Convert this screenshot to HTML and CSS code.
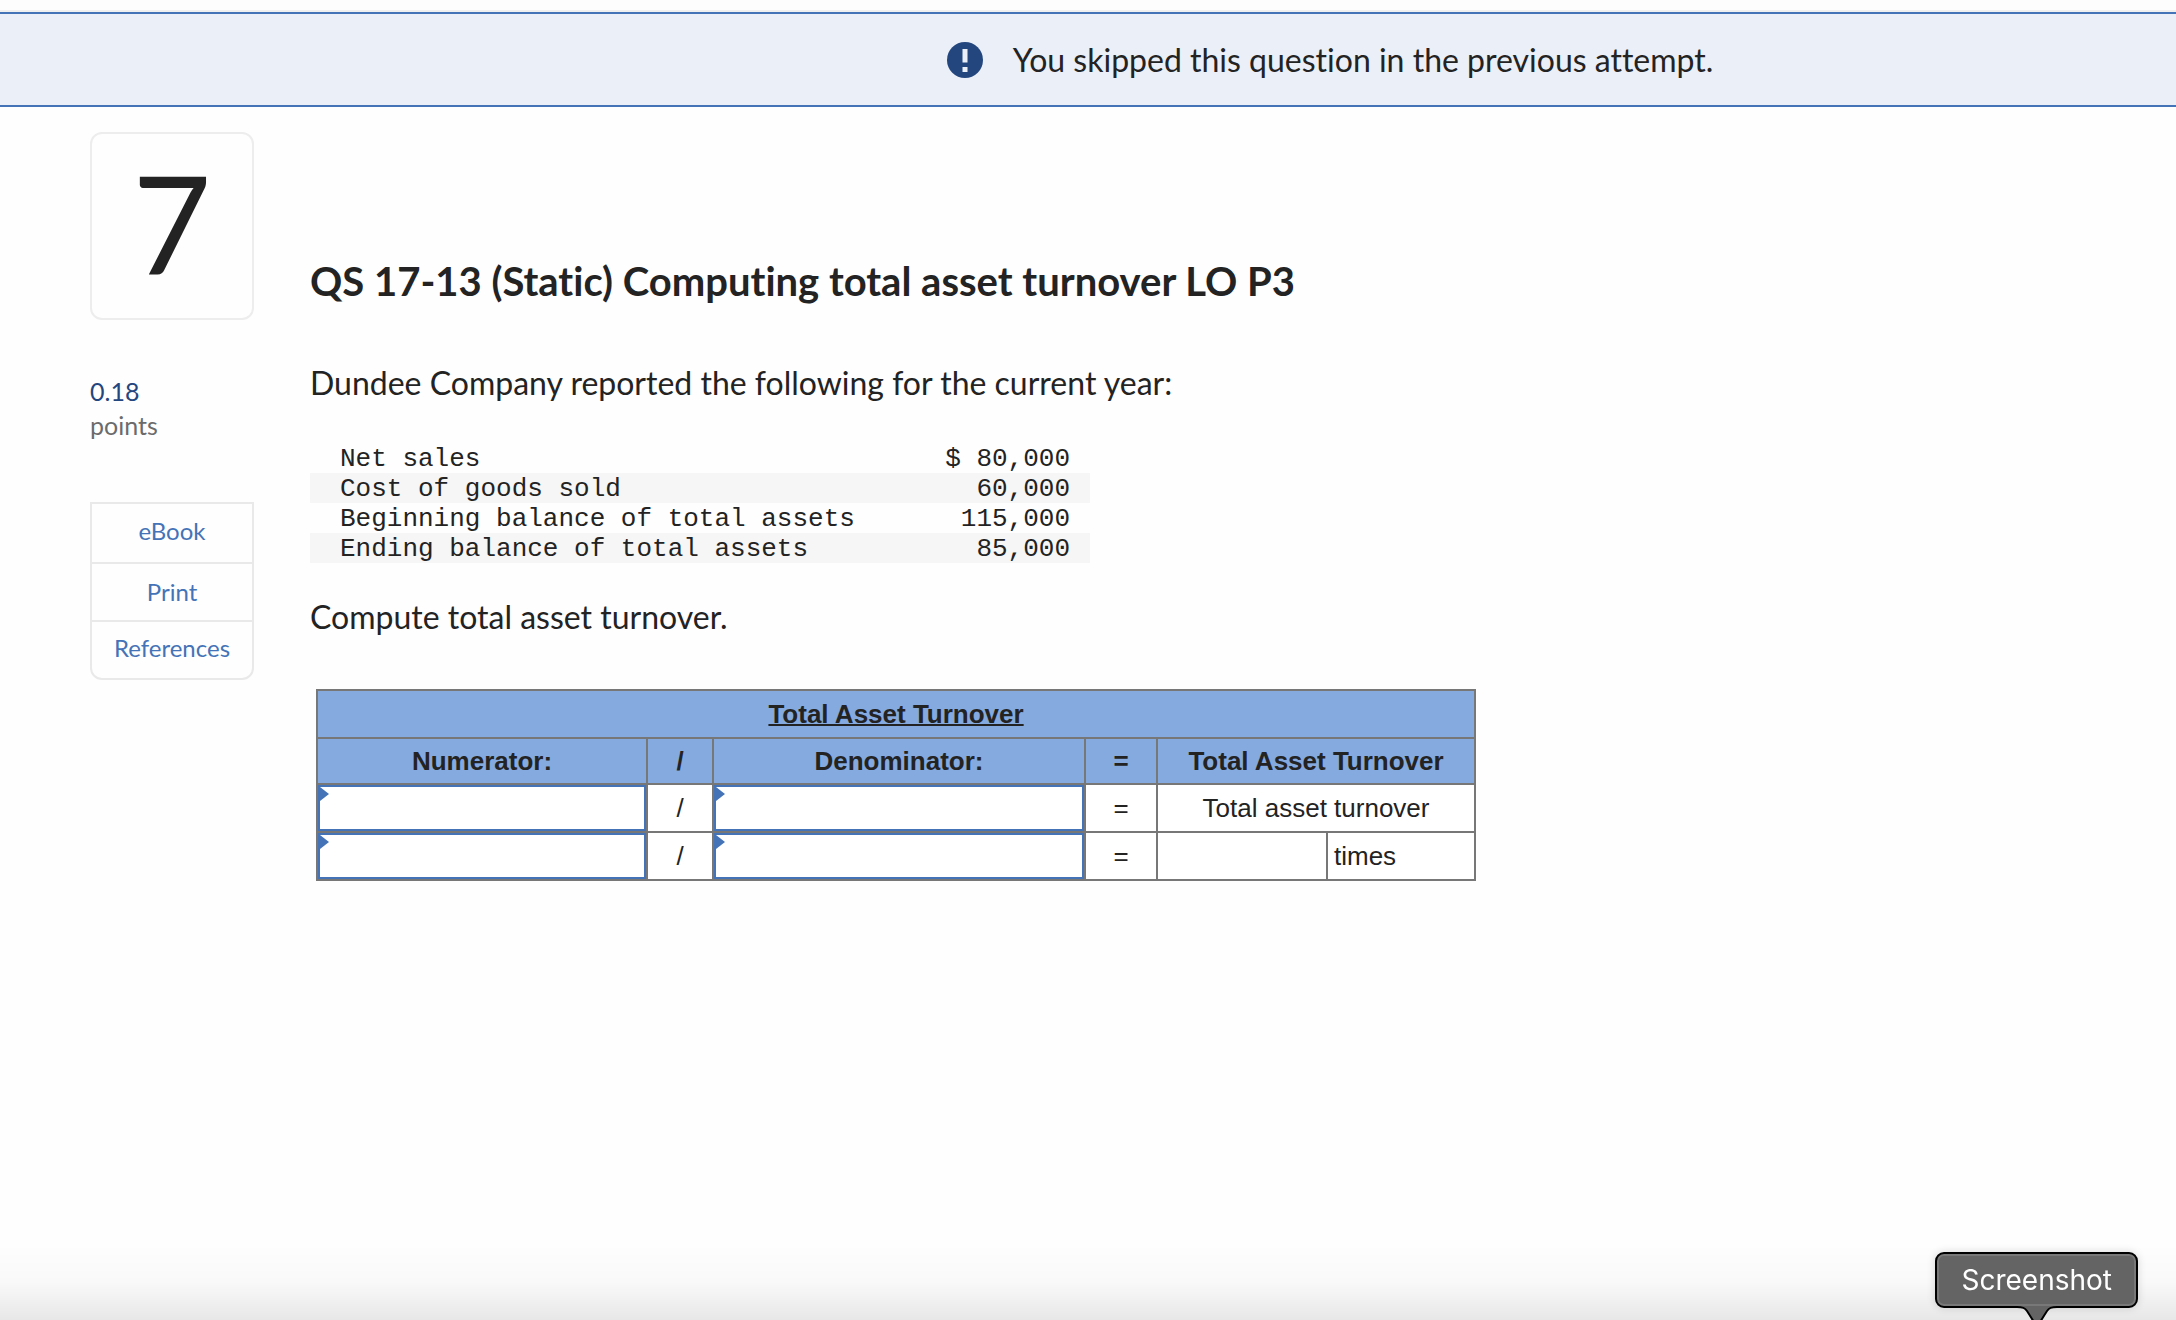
FILE: index.html
```html
<!DOCTYPE html>
<html lang="en">

<head>
    <meta charset="UTF-8">
    <meta name="viewport" content="width=device-width, initial-scale=1.0">
    <title>QS 17-13 (Static) Computing total asset turnover</title>
    <link rel="stylesheet" href="styles.css">
</head>

<body>
    <div class="top-strip"></div>

    <div class="banner" role="status">
        <svg class="banner-icon" viewBox="0 0 36 36" aria-hidden="true">
            <circle cx="18" cy="18" r="18" fill="#23467f" />
            <rect x="15.5" y="7" width="5" height="13.5" fill="#ebeff7" />
            <rect x="15.5" y="25" width="5" height="5" fill="#ebeff7" />
        </svg>
        <span>You skipped this question in the previous attempt.</span>
    </div>

    <div class="page">
        <aside class="sidebar">
            <div class="question-number">7</div>
            <div class="points">
                <div class="points-value">0.18</div>
                <div class="points-label">points</div>
            </div>
            <nav class="tools">
                <a href="#">eBook</a>
                <a href="#">Print</a>
                <a href="#">References</a>
            </nav>
        </aside>

        <main class="question">
            <h1>QS 17-13 (Static) Computing total asset turnover LO P3</h1>
            <p class="intro">Dundee Company reported the following for the current year:</p>

            <table class="data">
                <tr>
                    <td>Net sales</td>
                    <td class="amount">$ 80,000</td>
                </tr>
                <tr>
                    <td>Cost of goods sold</td>
                    <td class="amount">60,000</td>
                </tr>
                <tr>
                    <td>Beginning balance of total assets</td>
                    <td class="amount">115,000</td>
                </tr>
                <tr>
                    <td>Ending balance of total assets</td>
                    <td class="amount">85,000</td>
                </tr>
            </table>

            <p class="task">Compute total asset turnover.</p>

            <table class="answer">
                <colgroup>
                    <col class="col-numerator">
                    <col class="col-slash">
                    <col class="col-denominator">
                    <col class="col-equals">
                    <col class="col-result">
                    <col class="col-unit">
                </colgroup>
                <thead>
                    <tr class="answer-title">
                        <th colspan="6">Total Asset Turnover</th>
                    </tr>
                    <tr class="answer-head">
                        <th>Numerator:</th>
                        <th>/</th>
                        <th>Denominator:</th>
                        <th>=</th>
                        <th colspan="2">Total Asset Turnover</th>
                    </tr>
                </thead>
                <tbody>
                    <tr>
                        <td><label class="pick"><input type="text" aria-label="Numerator label"></label></td>
                        <td>/</td>
                        <td><label class="pick"><input type="text" aria-label="Denominator label"></label></td>
                        <td>=</td>
                        <td colspan="2">Total asset turnover</td>
                    </tr>
                    <tr>
                        <td><label class="pick"><input type="text" aria-label="Numerator amount"></label></td>
                        <td>/</td>
                        <td><label class="pick"><input type="text" aria-label="Denominator amount"></label></td>
                        <td>=</td>
                        <td><input class="result" id="result" type="text" aria-label="Total asset turnover"></td>
                        <td class="unit"><label for="result">times</label></td>
                    </tr>
                </tbody>
            </table>
        </main>
    </div>

    <div class="bottom-shade"></div>

    <div class="tooltip" role="tooltip">
        Screenshot
        <svg class="tooltip-arrow" viewBox="0 0 40 16" aria-hidden="true">
            <path d="M0 0H40V1C33 1 32 3 30 5L24 16H16L10 5C8 3 7 1 0 1Z" fill="#646464" />
            <path d="M0 1C6 1 8 2 10 5L17 16M23 16L30 5C32 2 34 1 40 1" fill="none" stroke="#000" stroke-width="2" />
        </svg>
    </div>
</body>

</html>
```
FILE: styles.css
```css
* {
    box-sizing: border-box;
}

body {
    margin: 0;
    min-height: 100vh;
    background-color: #fefefe;
    color: #232323;
    font-family: Lato, 'Open Sans', sans-serif;
    font-size: 32px;
    font-variant-ligatures: none;
    line-height: 40px;
    overflow: hidden;
}

.top-strip {
    height: 12px;
    background-color: #fdfdfd;
    border-bottom: 2px solid #f0f0f0;
}

/* Notice banner */
.banner {
    display: flex;
    align-items: center;
    justify-content: center;
    gap: 30px;
    height: 95px;
    padding-left: 484px;
    background-color: #ebeff7;
    border-top: 2px solid #4573b7;
    border-bottom: 2px solid #4573b7;
}

.banner-icon {
    width: 36px;
    height: 36px;
}

.page {
    display: flex;
    align-items: flex-start;
    gap: 56px;
    padding: 25px 90px;
}

/* Left column */
.sidebar {
    flex: 0 0 164px;
}

.question-number {
    height: 188px;
    border: 2px solid #ededed;
    border-radius: 12px;
    font-size: 136px;
    line-height: 176px;
    text-align: center;
}

.points {
    margin-top: 54px;
    font-size: 25px;
    line-height: 34px;
}

.points-value {
    color: #23467f;
}

.points-label {
    color: #6b6b6b;
}

.tools {
    margin-top: 60px;
    border: 2px solid #e9e9e9;
    border-radius: 0 0 12px 12px;
}

.tools a {
    display: block;
    color: #4573b7;
    font-size: 24px;
    line-height: 56px;
    text-align: center;
    text-decoration: none;
}

.tools a + a {
    border-top: 2px solid #e9e9e9;
}

.tools a:first-child {
    padding-bottom: 4px;
    line-height: 54px;
}

.tools a:last-child {
    padding-bottom: 4px;
    line-height: 52px;
}

.tools a:hover {
    text-decoration: underline;
}

/* Question body */
.question {
    flex: 1;
    min-width: 0;
    padding-top: 125px;
}

h1 {
    margin: 0;
    font-size: 40px;
    line-height: 48px;
}

.intro {
    margin: 58px 0 40px;
}

.task {
    margin: 34px 0 52px;
}

.data {
    width: 780px;
    border-collapse: collapse;
    font-family: 'Liberation Mono', 'Courier New', monospace;
    font-size: 26px;
    line-height: 28px;
}

.data td {
    padding: 2px 0 0 30px;
}

.data tr:nth-child(even) {
    background-color: #f6f6f6;
}

.data .amount {
    padding-right: 20px;
    text-align: right;
}

/* Answer grid */
.answer {
    width: 1160px;
    margin-left: 6px;
    border-collapse: collapse;
    table-layout: fixed;
    font-family: 'Liberation Sans', Arial, sans-serif;
    font-size: 26px;
    line-height: 46px;
    text-align: center;
}

.col-numerator {
    width: 330px;
}

.col-slash {
    width: 66px;
}

.col-denominator {
    width: 372px;
}

.col-equals {
    width: 72px;
}

.col-result {
    width: 170px;
}

.col-unit {
    width: 148px;
}

.answer th,
.answer td {
    padding: 0;
    border: 2px solid #777;
}

.answer th {
    background-color: #84aae0;
}

.answer-title th {
    text-decoration: underline;
    text-decoration-thickness: 2px;
}

.answer-head th {
    line-height: 44px;
}

.answer td {
    background-color: #fff;
}

.answer .unit {
    padding-left: 6px;
    text-align: left;
}

.answer input {
    display: block;
    width: 100%;
    height: 46px;
    padding: 0 12px;
    border: none;
    outline: none;
    background: none;
    color: inherit;
    font: inherit;
}

.pick {
    display: block;
    position: relative;
}

.answer .pick input {
    border: 2px solid #4573b7;
}

/* small marker in the corner of each pick cell */
.pick::before {
    content: '';
    position: absolute;
    top: 2px;
    left: 2px;
    width: 9px;
    height: 14px;
    background-color: #4573b7;
    clip-path: polygon(0 0, 100% 50%, 0 100%);
}

/* Bottom edge */
.bottom-shade {
    position: fixed;
    left: 0;
    right: 0;
    bottom: 0;
    height: 76px;
    background: linear-gradient(rgba(0, 0, 0, 0), rgba(0, 0, 0, 0.02) 50%, rgba(0, 0, 0, 0.09));
    pointer-events: none;
}

.tooltip {
    position: fixed;
    right: 38px;
    bottom: 12px;
    padding: 0 24px;
    border: 2px solid #000;
    border-radius: 9px;
    background-color: #646464;
    box-shadow: inset 0 0 0 2px #787878, 0 0 8px rgba(0, 0, 0, 0.15);
    color: #fff;
    font-family: Inter, sans-serif;
    font-size: 28px;
    line-height: 52px;
}

.tooltip-arrow {
    position: absolute;
    top: 52px;
    left: 50%;
    width: 40px;
    height: 16px;
    margin-left: -20px;
}
```
